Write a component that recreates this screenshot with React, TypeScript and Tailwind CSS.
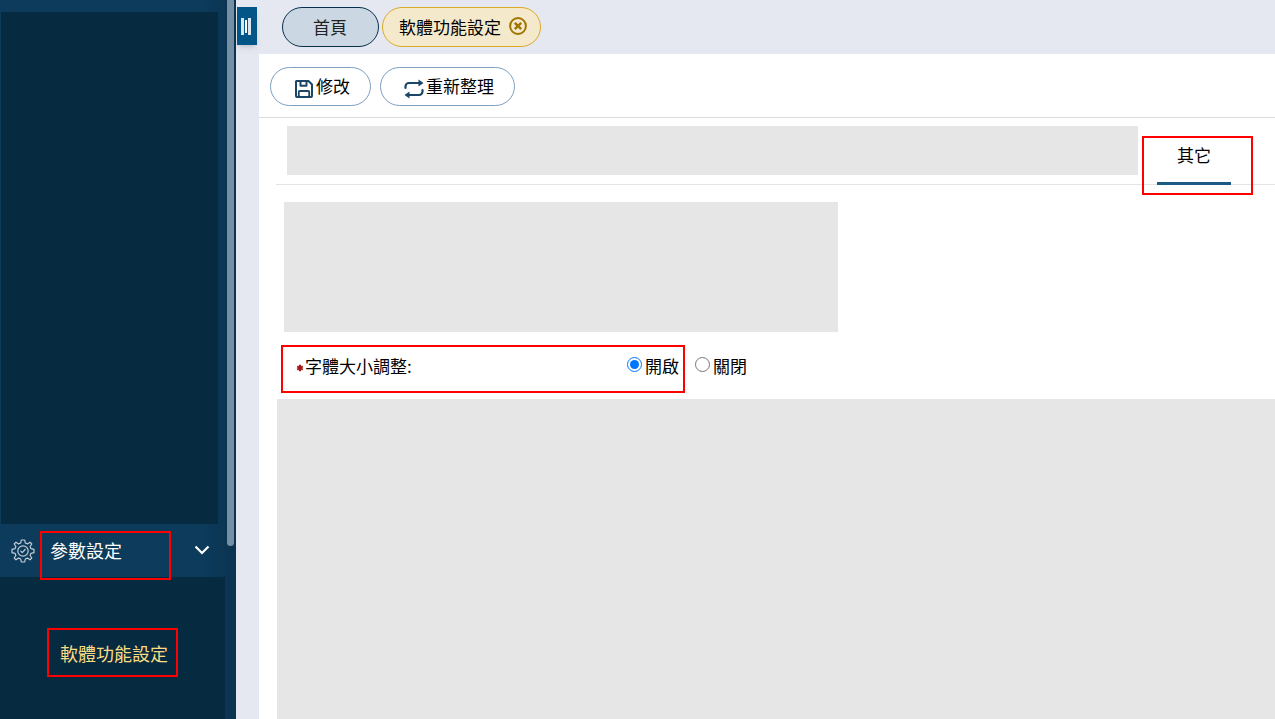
import { useState } from 'react';
import type { ReactNode } from 'react';

const Mark = ({ className = '' }: { className?: string }) => (
	<span aria-hidden className={`pointer-events-none absolute border-2 border-[#fe0000] ${className}`} />
);

const SaveIcon = () => (
	<svg className="mt-1 size-5" viewBox="0 0 20 20" fill="none" stroke="#1c4566" strokeWidth="2" strokeLinejoin="round">
		<path d="M2.500 2h12L18 5.500V17a1 1 0 0 1-1 1H3a1 1 0 0 1-1-1V2.500z" />
		<path d="M6.500 2.500v4.300h6V2.500" strokeWidth="2" />
		<path d="M4.800 17.500v-4.500a1 1 0 0 1 1-1h8.400a1 1 0 0 1 1 1v4.500" strokeWidth="1.800" />
	</svg>
);

const RefreshIcon = () => (
	<svg className="mt-1 size-5" viewBox="0 0 20 20" fill="none" stroke="#1c4566" strokeWidth="2.200" strokeLinecap="round">
		<path d="M1.500 9V7.500A3.500 3.500 0 0 1 5 4h10.500" />
		<path d="M18.500 11v1.500A3.500 3.500 0 0 1 15 16H4.500" />
		<path d="M14.500 .5v7L19.500 4zM5.500 12.500v7L.5 16z" fill="#1c4566" stroke="none" />
	</svg>
);

const CloseIcon = () => (
	<svg className="size-5" viewBox="0 0 20 20" fill="none" stroke="#a07400">
		<circle cx="10" cy="10" r="7.900" strokeWidth="2" />
		<path d="M6.800 6.800l6.400 6.400M13.200 6.800l-6.400 6.400" strokeWidth="2.400" />
	</svg>
);

const GearIcon = () => (
	<svg
		className="size-6 shrink-0"
		viewBox="0 0 24 24"
		fill="none"
		stroke="#c3ced7"
		strokeWidth="1.200"
		strokeLinejoin="round"
		strokeLinecap="round"
	>
		<path d="M10.300 1h3.400l.6 3 2.200.9L19 3.200 20.800 5l-1.700 2.500.9 2.200 3 .6v3.400l-3 .6-.9 2.200 1.700 2.500-1.800 1.800-2.500-1.700-2.200.9-.6 3h-3.400l-.6-3-2.200-.9L5 20.800 3.200 19l1.700-2.500-.9-2.200-3-.6v-3.400l3-.6.9-2.200L3.200 5 5 3.200l2.500 1.700 2.200-.9z" />
		<circle cx="12" cy="12" r="5.200" />
		<path d="M9.800 12.200l1.500 1.500 2.800-3.200" />
	</svg>
);

const ToolButton = ({ icon, children }: { icon: ReactNode; children: ReactNode }) => (
	<button type="button" className="flex h-[39px] items-center gap-0.5 rounded-full border border-[#7f9fbe] bg-white pr-5 pl-[23px]">
		{icon}
		<span className="pb-0.5">{children}</span>
	</button>
);

const Sidebar = () => (
	<aside className="flex w-[236px] shrink-0 bg-linear-to-r from-[#0c3b5b] from-85% to-[#0b3350] text-lg">
		<div className="flex flex-1 flex-col pt-3">
			<div className="mr-[7px] ml-px h-[512px] bg-[#062b41]" />
			<button type="button" className="relative flex h-[53px] items-center pr-[15px] pb-0.5 pl-[11px] text-white">
				<span className="pt-0.5">
					<GearIcon />
				</span>
				<span className="ml-[15px]">參數設定</span>
				<svg className="ml-auto size-4" viewBox="0 0 16 16" fill="none" stroke="white" strokeWidth="2.200">
					<path d="M1.500 4.500l6.500 6.500 6.500-6.500" />
				</svg>
				<Mark className="top-[7px] left-10 h-[49px] w-[131px]" />
			</button>
			<nav className="flex-1 bg-[#062b41] pt-[51px] pl-[47px]">
				<a
					href="#settings"
					className="flex h-[49px] w-[131px] items-center justify-end border-2 border-[#fe0000] pr-2 text-[#fbdc83]"
				>
					軟體功能設定
				</a>
			</nav>
		</div>
		<div className="flex w-[11px] justify-center">
			<div className="-mt-1 h-[550px] w-[7px] rounded-full bg-[#7590a4]" />
		</div>
	</aside>
);

const App = () => {
	const [fontResize, setFontResize] = useState('on');

	return (
		<div className="flex min-h-screen bg-[#e5e8f1] font-['Noto_Sans_CJK_TC',sans-serif] text-[17px] leading-6 text-black">
			<Sidebar />
			<div className="w-[23px] shrink-0 pt-[7px] pl-px">
				<button
					type="button"
					aria-label="Toggle menu"
					className="flex h-[38px] w-5 items-center justify-center gap-px bg-[#015687] pr-0.5 shadow-md"
				>
					<span className="h-[17px] w-[3px] bg-[#d9e6ef]" />
					<span className="h-[13px] w-[2px] bg-white" />
					<span className="h-[17px] w-[3px] bg-[#d9e6ef]" />
				</button>
			</div>

			<div className="flex min-w-0 flex-1 flex-col">
				<header className="flex h-[54px] gap-[3px] pt-[7px] pl-[23px]">
					<button type="button" className="h-10 rounded-[20px] border border-[#06304a] bg-[#cbd8e3] pr-[31px] pl-[30px] text-[#222]">
						首頁
					</button>
					<div className="flex h-10 items-center gap-[7px] rounded-[20px] border border-[#d9ab26] bg-[#f4eacb] pr-3 pl-4">
						<span>軟體功能設定</span>
						<button type="button" aria-label="Close tab" className="-mt-0.5">
							<CloseIcon />
						</button>
					</div>
				</header>

				<main className="flex flex-1 flex-col bg-white">
					<div className="flex h-16 gap-[9px] border-b border-[#dcdcdc] pt-[13px] pl-[11px]">
						<ToolButton icon={<SaveIcon />}>修改</ToolButton>
						<ToolButton icon={<RefreshIcon />}>重新整理</ToolButton>
					</div>

					<div className="ml-[17px] flex h-[67px] border-b border-[#e4e4e4] pr-11 pl-[11px]">
						<div className="mt-2 h-[49px] flex-1 bg-[#e6e6e6]" />
						<div className="relative ml-[19px] flex w-[74px]">
							<button type="button" className="-mb-px flex-1 border-b-3 border-[#1c5a85] pt-2.5">
								其它
							</button>
							<Mark className="top-[18px] -right-[22px] -left-[15px] h-[59px]" />
						</div>
					</div>

					<div className="mt-[17px] ml-[25px] h-[130px] w-[554px] bg-[#e6e6e6]" />

					<div role="radiogroup" aria-label="字體大小調整" className="mt-[13px] ml-[22px] flex h-12">
						<div className="flex w-[404px] items-center justify-between border-2 border-[#fe0000] pr-1 pb-1.5 pl-[13px]">
							<span className="flex items-center">
								<svg className="mt-1 mr-px size-2" viewBox="0 0 8 8" stroke="#a01818" strokeWidth="2">
									<path d="M4 .8v6.400M1.200 2.400l5.600 3.200M6.800 2.400L1.200 5.600" />
								</svg>
								字體大小調整:
							</span>
							<label className="flex items-center gap-[3px]">
								<input
									type="radio"
									name="fontResize"
									className="-mt-1 size-[15px] accent-[#0075ff]"
									checked={fontResize === 'on'}
									onChange={() => setFontResize('on')}
								/>
								開啟
							</label>
						</div>
						<label className="ml-[10px] flex items-center gap-[3px] pb-1.5">
							<input
								type="radio"
								name="fontResize"
								className="-mt-1 size-[15px] accent-[#0075ff]"
								checked={fontResize === 'off'}
								onChange={() => setFontResize('off')}
							/>
							關閉
						</label>
					</div>

					<div className="mt-[6px] ml-[18px] flex-1 bg-[#e6e6e6]" />
				</main>
			</div>
		</div>
	);
};

export default App;
